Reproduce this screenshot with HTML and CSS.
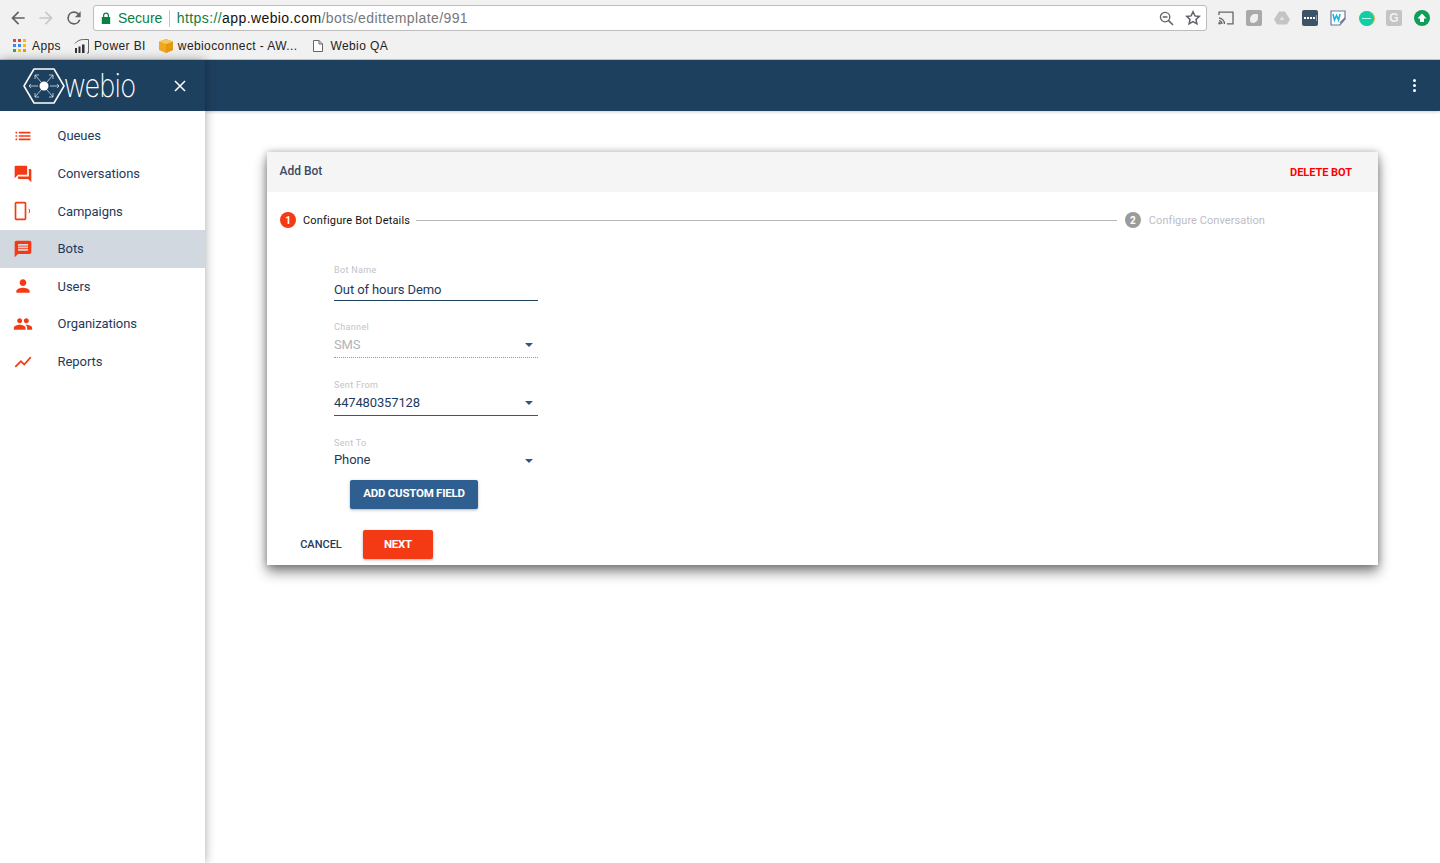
FILE: index.html
```html
<!DOCTYPE html>
<html lang="en">
<head>
<meta charset="utf-8">
<title>Webio</title>
<link rel="stylesheet" href="styles.css">
</head>
<body>
<div class="chrome">
  <div class="toolbar">
    <span class="tool"><svg viewBox="0 0 24 24" width="20" height="20"><path fill="#5f6368" d="M20 11H7.800l5.600-5.600L12 4l-8 8 8 8 1.400-1.400L7.800 13H20z"/></svg></span>
    <span class="tool"><svg viewBox="0 0 24 24" width="20" height="20"><path fill="#c8c8c8" d="M4 11h12.200l-5.600-5.600L12 4l8 8-8 8-1.400-1.400 5.600-5.600H4z"/></svg></span>
    <span class="tool"><svg viewBox="0 0 24 24" width="20" height="20"><path fill="#5f6368" d="M17.650 6.350A7.950 7.950 0 0 0 12 4a8 8 0 1 0 7.730 10h-2.080A6 6 0 1 1 12 6c1.660 0 3.140.69 4.220 1.780L13 11h7V4z"/></svg></span>
    <div class="address">
      <svg class="lock" viewBox="0 0 10 12" width="10" height="12"><path fill="#0b8043" d="M2 5V3.500a3 3 0 0 1 6 0V5h1.200v7H.8V5zm1.200 0h3.600V3.500a1.800 1.800 0 0 0-3.600 0z"/></svg>
      <span class="secure">Secure</span>
      <span class="sep"></span>
      <span class="url"><span class="scheme">https://</span><span class="host">app.webio.com</span><span class="path">/bots/edittemplate/991</span></span>
      <span class="addr-end">
        <svg viewBox="0 0 16 16" width="15" height="15"><circle cx="6.500" cy="6.500" r="5" fill="none" stroke="#5f6368" stroke-width="1.400"/><path stroke="#5f6368" stroke-width="1.600" d="M10 10l5 5M4 6.500h5" fill="none"/></svg>
        <svg viewBox="0 0 16 16" width="16" height="16"><path fill="none" stroke="#5f6368" stroke-width="1.500" d="M8 1.800l1.900 4.100 4.400.5-3.300 3 .9 4.400L8 11.600l-3.900 2.200.9-4.400-3.300-3 4.400-.5z"/></svg>
      </span>
    </div>
    <div class="exts">
      <span class="ext"><svg viewBox="0 0 16 14" width="16" height="14"><path fill="none" stroke="#666" stroke-width="1.300" d="M1 4V1.200h14v11.600H9M1 7a6 6 0 0 1 5.500 6M1 9.600A3.400 3.400 0 0 1 4 13"/><circle cx="1.600" cy="12.300" r="1.200" fill="#666"/></svg></span>
      <span class="ext"><span class="e-square e-grey"><span class="e-leaf"></span></span></span>
      <span class="ext"><svg viewBox="0 0 16 14" width="16" height="14"><path fill="#c4c4c4" d="M5 .5h6l5 8-3 5H3l-3-5z"/><path fill="#e4e4e4" d="M8 5l2.200 4H5.800z"/></svg></span>
      <span class="ext"><span class="e-square e-dark"><svg viewBox="0 0 16 16" width="16" height="16"><path fill="#fff" d="M2 7h2v2H2zM5 7h2v2H5zM8 7h2v2H8zM11 7h2v2h-2z"/><path fill="#8fa0b0" d="M14 5h1v6h-1z"/></svg></span></span>
      <span class="ext"><svg viewBox="0 0 16 16" width="16" height="16"><path fill="#fff" stroke="#6b7a90" stroke-width="1.200" d="M1 1h14v8l-5 6H1z"/><path fill="none" stroke="#18b8dc" stroke-width="1.600" d="M3 4l1.500 6 2-4.500L8.500 10 10 4"/><path stroke="#6b7a90" stroke-width="1.500" d="M10 13l5-5"/></svg></span>
      <span class="ext"><span class="e-round e-teal"><span class="e-line"></span></span></span>
      <span class="ext"><span class="e-square e-light">G</span></span>
      <span class="ext"><svg viewBox="0 0 16 16" width="16" height="16"><circle cx="8" cy="8" r="8" fill="#0f9d58"/><path fill="#fff" d="M8 3.500L12.500 8.500H10V12H6V8.500H3.500z"/></svg></span>
    </div>
  </div>
  <div class="bookmarks">
    <span class="bm bm-apps"><svg viewBox="0 0 13 13" width="13" height="13"><path fill="#ea4335" d="M0 0h3v3H0zM5 0h3v3H5z"/><path fill="#fbbc05" d="M10 0h3v3h-3zM10 5h3v3h-3z"/><path fill="#4285f4" d="M5 5h3v3H5zM0 5h3v3H0z"/><path fill="#34a853" d="M0 10h3v3H0z"/><path fill="#fbbc05" d="M5 10h3v3H5z"/><path fill="#f29900" d="M10 10h3v3h-3z"/></svg>Apps</span>
    <span class="bm bm-bi"><svg viewBox="0 0 16 16" width="16" height="16"><path fill="none" stroke="#666" d="M1 5.500C3 3 6 1.500 9.500 1.500H14.500V15H13"/><path fill="#333" d="M1 10h2v5H1zM4.500 8.500h2V15h-2zM8 6.500h2.500V15H8z"/></svg>Power BI</span>
    <span class="bm bm-aws"><svg viewBox="0 0 14 14" width="14" height="14"><path fill="#f0a81e" d="M0 2.500L7 0l7 2.500V11l-7 3-7-3z"/><path fill="#e39a12" d="M7 5v9l7-3V2.500z"/><path fill="#f9c65a" d="M0 2.500L7 5l7-2.500L7 0z"/></svg>webioconnect - AW...</span>
    <span class="bm bm-qa"><svg viewBox="0 0 10 12" width="10" height="12"><path fill="#fff" stroke="#666" d="M.5.500h5.500l3.500 3.500v7.500h-9z"/><path fill="none" stroke="#666" d="M6 .500V4h3.500"/></svg>Webio QA</span>
  </div>
</div>
<div class="app">
  <aside class="sidebar">
    <div class="brand">
      <svg class="logo" viewBox="0 0 42 38" width="42" height="38">
        <path fill="none" stroke="#fff" stroke-width="1.500" stroke-linejoin="round" d="M11 2h20l10 17-10 17H11L1 19z"/>
        <circle cx="21" cy="19" r="4.500" fill="#fff"/>
        <path fill="none" stroke="#d7e0e8" stroke-width=".8" d="M6 19h9M27 19h9M12 8l6 7M30 8l-6 7M12 30l6-7M30 30l-6-7M12 12V8h4M30 12V8h-4M12 26v4h4M30 26v4h-4M8 17l-2 2 2 2M34 17l2 2-2 2"/>
      </svg>
      <span class="wordmark">webio</span>
      <svg class="close" viewBox="0 0 12 12" width="12" height="12"><path stroke="#fff" stroke-width="1.500" d="M1 1l10 10M11 1L1 11"/></svg>
    </div>
    <nav class="nav">
      <a class="nav-item"><svg viewBox="0 0 24 24"><path d="M3 13h2v-2H3v2zm0 4h2v-2H3v2zm0-8h2V7H3v2zm4 4h14v-2H7v2zm0 4h14v-2H7v2zM7 7v2h14V7H7z"/></svg>Queues</a>
      <a class="nav-item"><svg viewBox="0 0 24 24"><path d="M21 6h-2v9H6v2c0 .55.45 1 1 1h11l4 4V7c0-.55-.45-1-1-1zm-4 6V3c0-.55-.45-1-1-1H3c-.55 0-1 .45-1 1v14l4-4h10c.55 0 1-.45 1-1z"/></svg>Conversations</a>
      <a class="nav-item"><svg viewBox="0 0 24 24"><path d="M14 1H4c-1.100 0-2 .9-2 2v18c0 1.100.9 2 2 2h10c1.100 0 2-.9 2-2V3c0-1.100-.9-2-2-2zm0 20H4V3h10z"/><path class="arc" d="M19 9.500c1.300 1.500 1.300 3.500 0 5"/></svg>Campaigns</a>
      <a class="nav-item is-active"><svg viewBox="0 0 24 24"><path d="M20 2H4c-1.100 0-1.990.9-1.990 2L2 22l4-4h14c1.100 0 2-.9 2-2V4c0-1.100-.9-2-2-2zm-2 12H6v-2h12v2zm0-3H6V9h12v2zm0-3H6V6h12v2z"/></svg>Bots</a>
      <a class="nav-item"><svg viewBox="0 0 24 24"><path d="M12 12c2.210 0 4-1.790 4-4s-1.790-4-4-4-4 1.790-4 4 1.790 4 4 4zm0 2c-2.670 0-8 1.340-8 4v2h16v-2c0-2.660-5.330-4-8-4z"/></svg>Users</a>
      <a class="nav-item"><svg viewBox="0 0 24 24"><path d="M16 11c1.660 0 2.990-1.340 2.990-3S17.660 5 16 5c-1.660 0-3 1.340-3 3s1.340 3 3 3zm-8 0c1.660 0 2.990-1.340 2.990-3S9.660 5 8 5C6.340 5 5 6.340 5 8s1.340 3 3 3zm0 2c-2.330 0-7 1.170-7 3.500V19h14v-2.500c0-2.330-4.670-3.500-7-3.500zm8 0c-.29 0-.62.02-.97.05 1.160.84 1.970 1.970 1.970 3.450V19h6v-2.500c0-2.330-4.670-3.500-7-3.500z"/></svg>Organizations</a>
      <a class="nav-item"><svg viewBox="0 0 24 24"><path d="M3.500 18.490l6-6.010 4 4L22 6.920l-1.410-1.410-7.090 7.970-4-4L2 16.990z"/></svg>Reports</a>
    </nav>
  </aside>
  <div class="content">
    <header class="topbar"><span class="kebab"><i></i><i></i><i></i></span></header>
    <main class="main">
      <section class="card">
        <div class="card-head"><span class="card-title">Add Bot</span><span class="delete">DELETE BOT</span></div>
        <div class="stepper">
          <span class="step-num">1</span><span class="step-label">Configure Bot Details</span>
          <span class="step-line"></span>
          <span class="step-num is-off">2</span><span class="step-label is-off">Configure Conversation</span>
        </div>
        <form class="form">
          <div class="field field-input"><span class="f-label">Bot Name</span><div class="f-value is-dark">Out of hours Demo</div></div>
          <div class="field field-disabled"><span class="f-label">Channel</span><div class="f-value">SMS<span class="caret"></span></div></div>
          <div class="field field-select"><span class="f-label">Sent From</span><div class="f-value">447480357128<span class="caret"></span></div></div>
          <div class="field field-plain"><span class="f-label">Sent To</span><div class="f-value">Phone<span class="caret"></span></div></div>
          <button type="button" class="btn btn-blue">ADD CUSTOM FIELD</button>
        </form>
        <div class="actions">
          <button type="button" class="btn-text">CANCEL</button>
          <button type="button" class="btn btn-red">NEXT</button>
        </div>
      </section>
    </main>
  </div>
</div>
</body>
</html>
```
FILE: styles.css
```css
* { box-sizing: border-box; }
html, body { margin: 0; height: 100%; overflow: hidden; }
body { font-family: Roboto, "Liberation Sans", sans-serif; background: #fff; color: #1f3a5c; display: flex; flex-direction: column; height: 863px; }

.chrome { height: 60px; background: #f1f1f1; border-bottom: 1px solid #c9c9c9; flex: none; font-family: "Liberation Sans", Arial, sans-serif; }
.toolbar { height: 35px; padding: 5px 4px 4px; display: flex; align-items: center; }
.tool { width: 28px; height: 26px; display: flex; align-items: center; justify-content: center; }
.address { margin-left: 5px; width: 1114px; height: 26px; background: #fff; border: 1px solid #bdbdbd; border-radius: 3px; display: flex; align-items: center; padding: 0 5px 0 7px; font-size: 14px; }
.lock { margin-right: 7px; }
.secure { color: #0b8043; }
.sep { width: 1px; height: 17px; background: #c4c4c4; margin: 0 7px 0 6.5px; }
.url { letter-spacing: .4px; }
.scheme { color: #0b8043; }
.host { color: #111; }
.path { color: #777; }
.addr-end { margin-left: auto; display: flex; align-items: center; gap: 11px; }
.exts { margin-left: 5px; display: flex; }
.ext { width: 28px; height: 26px; display: flex; align-items: center; justify-content: center; }
.e-square { width: 16px; height: 16px; border-radius: 2px; display: flex; align-items: center; justify-content: center; }
.e-grey { background: #a9a9a9; }
.e-leaf { width: 8px; height: 9px; background: #efefef; border-radius: 5px 1px 5px 3px; }
.e-dark { background: #3f5366; }
.e-round { width: 15px; height: 15px; border-radius: 50%; display: flex; align-items: center; justify-content: center; }
.e-teal { background: #0fcfa8; box-shadow: 1px 0 0 #e4b24a; }
.e-line { width: 9px; height: 1px; background: #bff3e6; }
.e-light { background: #c4c4c4; color: #f2f2f2; font: 700 12px "Liberation Sans", sans-serif; }
.bookmarks { height: 24px; font-size: 12px; letter-spacing: .4px; color: #222; padding-bottom: 3px; display: flex; align-items: center; }
.bm { display: flex; align-items: center; white-space: nowrap; }
.bm-apps { margin-left: 13px; gap: 6px; }
.bm-bi { margin-left: 13px; gap: 4px; }
.bm-aws { margin-left: 13px; gap: 5px; }
.bm-qa { margin-left: 16px; gap: 7px; }

.app { flex: 1; display: flex; min-height: 0; }
.sidebar { width: 205px; flex: none; background: #fff; box-shadow: 0 0 10px rgba(0,0,0,.35); position: relative; z-index: 2; }
.brand { height: 51px; background: #1e405f; display: flex; align-items: center; padding-left: 23px; color: #fff; }
.logo { flex: none; }
.wordmark { font-family: Inter, sans-serif; font-weight: 200; font-size: 33px; line-height: 1; margin-left: -1px; transform: scaleX(.8); transform-origin: left center; letter-spacing: -.4px; }
.close { margin-left: auto; margin-right: 19px; }
.nav { padding-top: 6.2px; display: flex; flex-direction: column; }
.nav-item { height: 37.6px; display: flex; align-items: center; padding-left: 12.5px; font-size: 13px; letter-spacing: -.05px; color: #1f3a5c; }
.nav-item svg { width: 20px; height: 20px; margin-right: 25px; fill: #f43a14; flex: none; }
.nav-item svg .arc { fill: none; stroke: #f43a14; stroke-width: 1.2; }
.is-active { background: #d2d8e0; }

.content { flex: 1; min-width: 0; display: flex; flex-direction: column; }
.topbar { height: 51px; flex: none; background: #1e405f; box-shadow: 0 1px 3px rgba(0,0,0,.2); display: flex; align-items: center; justify-content: flex-end; padding-right: 24px; }
.kebab { display: flex; flex-direction: column; gap: 2px; }
.kebab i { width: 3px; height: 3px; border-radius: 50%; background: #fff; display: block; }
.main { padding: 41px 62px 0; }
.card { background: #fff; height: 413px; box-shadow: 0 7px 12px rgba(0,0,0,.48), 0 0 7px rgba(0,0,0,.25); }
.card-head { height: 40px; background: #f5f5f5; display: flex; align-items: center; justify-content: space-between; padding: 0 26px 0 12.5px; font-size: 12px; font-weight: 500; }
.card-title { color: #3c4a63; margin-top: -2px; }
.delete { color: #f00; font-size: 11px; font-weight: 700; letter-spacing: -.05px; }
.stepper { height: 56px; display: flex; align-items: center; padding: 0 113px 0 13px; font-size: 11px; }
.step-num { width: 16px; height: 16px; border-radius: 50%; background: #f43a14; color: #fff; font-size: 10px; font-weight: 700; display: flex; align-items: center; justify-content: center; flex: none; }
.step-num.is-off { background: #9b9b9b; }
.step-label { margin-left: 7px; color: #111; letter-spacing: .17px; white-space: nowrap; }
.step-label.is-off { margin-left: 8px; color: #bcbcc6; letter-spacing: .05px; }
.step-line { flex: 1; height: 1px; background: #b8b8b8; margin: 0 8px 0 6px; }
.form { padding-left: 67px; height: 280px; padding-top: 15.6px; display: flex; flex-direction: column; align-items: flex-start; }
.field { width: 204px; height: 57.5px; flex: none; }
.f-label { display: block; font-size: 9px; line-height: 12px; color: #c2c2c8; letter-spacing: .35px; }
.f-value { position: relative; height: 24px; font-size: 13px; line-height: 22px; letter-spacing: -.1px; color: #1f3a5c; }
.field-input .f-value { padding-top: 3px; height: 25px; border-bottom: 1px solid #1e405f; }
.field-disabled .f-value { padding-top: 1px; height: 25px; color: #b4b4b8; border-bottom: 1px dotted #999; }
.field-select .f-value { padding-top: 1px; height: 25px; letter-spacing: -.15px; border-bottom: 1px solid #2b5a8e; }
.field-plain { height: 43.9px; padding-top: .6px; }
.caret { position: absolute; right: 5px; top: 10px; border: 4px solid transparent; border-top-color: #2f568b; border-bottom: 0; }
.btn { height: 29px; border: 0; border-radius: 2px; color: #fff; font: 700 11.5px Roboto, sans-serif; letter-spacing: -.25px; box-shadow: 0 1px 3px rgba(0,0,0,.3); padding: 0 0 2px; }
.btn-blue { width: 128px; margin-left: 16px; background: #2e5f90; }
.btn-red { width: 70px; background: #f43a14; }
.actions { padding-left: 21px; display: flex; gap: 9px; margin-top: 2px; }
.btn-text { width: 66px; height: 29px; border: 0; background: transparent; color: #1f3a5c; font: 500 11px Roboto, sans-serif; padding: 0; }
```
